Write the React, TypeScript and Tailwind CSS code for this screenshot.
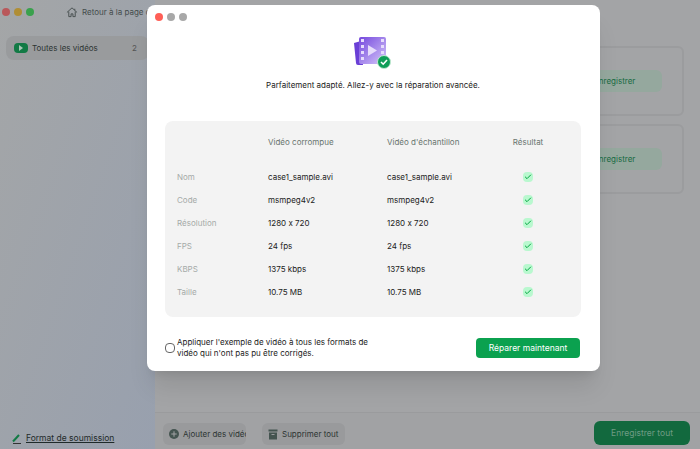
import { Check, Plus } from 'lucide-react';

const rows = [
  { label: 'Nom', value: 'case1_sample.avi' },
  { label: 'Code', value: 'msmpeg4v2' },
  { label: 'Résolution', value: '1280 x 720' },
  { label: 'FPS', value: '24 fps' },
  { label: 'KBPS', value: '1375 kbps' },
  { label: 'Taille', value: '10.75 MB' },
];

function VideoBadge() {
  return (
    <svg width="38" height="32" viewBox="0 0 38 32">
      <defs>
        <linearGradient id="film" x1="0" y1="0" x2="1" y2="1">
          <stop offset="0" stopColor="#7447dd" />
          <stop offset="1" stopColor="#d6c8fa" />
        </linearGradient>
      </defs>
      <path d="M0 6 L7 4 L9 28 L4 28 Q2 28 2 26 Z" fill="#6a3fd6" />
      <rect x="5" y="0" width="27" height="27" rx="2" fill="url(#film)" />
      <g fill="#e6dcfb">
        <rect x="7" y="2" width="3" height="3" />
        <rect x="7" y="8" width="3" height="3" />
        <rect x="7" y="14" width="3" height="3" />
        <rect x="7" y="20" width="3" height="3" />
        <rect x="27" y="2" width="3" height="3" />
        <rect x="27" y="8" width="3" height="3" />
        <rect x="27" y="14" width="3" height="3" />
      </g>
      <path d="M14 8 L23 13.500 L14 19 Z" fill="#e6dcfb" />
      <circle cx="30" cy="25" r="6.500" fill="#0f9d58" stroke="#bfe8d0" strokeWidth="1" />
      <path d="M27 25 L29.200 27.200 L33 23" fill="none" stroke="white" strokeWidth="1.600" />
    </svg>
  );
}

function ResultCheck() {
  return (
    <div className="flex size-2.5 items-center justify-center rounded-sm bg-green-200">
      <Check className="size-2 text-green-600" strokeWidth={3} />
    </div>
  );
}

function SavedCard() {
  return (
    <div className="flex h-[70px] items-center justify-end rounded-md border-2 border-[#9b9c9e] pr-5">
      <div className="flex h-5.5 w-24 items-center rounded-md bg-[#95a89e] pl-7 text-[#176b42]">Enregistrer</div>
    </div>
  );
}

export default function App() {
  return (
    <div className="relative flex h-[449px] w-[700px] overflow-hidden bg-[#a3a4a6] text-[8px] font-['Inter','Liberation_Sans',sans-serif] text-[#222] [font-feature-settings:'calt'_0]">
      {/* app behind the dialog */}
      <aside className="flex w-[155px] flex-col bg-gradient-to-br from-[#a4a6a7] to-[#98a0ae] px-1.5">
        <div className="-ml-1 flex h-6 items-center gap-1 whitespace-nowrap text-[#444c4c]">
          <span className="size-2 shrink-0 rounded-full bg-[#b9585a]" />
          <span className="size-2 shrink-0 rounded-full bg-[#b08e35]" />
          <span className="size-2 shrink-0 rounded-full bg-[#3aa14d]" />
          <svg width="12" height="12" viewBox="0 0 13 12" fill="none" stroke="#444c4c" className="ml-7 shrink-0">
            <path d="M1 6.500 L6.500 1.500 L12 6.500 M3 5.500 V11 H5.500 V8 H7.500 V11 H10 V5.500 M9.500 2.500 V4" />
          </svg>
          <span>Retour à la page d</span>
        </div>
        <div className="mt-3 flex h-6 items-center gap-1 rounded-lg bg-[#999b9d] pl-2 pr-3 text-[#2d3533]">
          <div className="flex h-2.5 w-3.5 items-center justify-center rounded-sm bg-[#127a45]">
            <div className="h-0 w-0 border-y-[3px] border-l-4 border-y-transparent border-l-[#a9c7b7]" />
          </div>
          <span className="flex-1">Toutes les vidéos</span>
          <span className="text-[#555]">2</span>
        </div>
        <div className="mt-auto mb-1 flex items-center gap-1 pl-1.5 text-[8.5px] text-[#1f2a2a]">
          <svg width="10" height="11" viewBox="0 0 10 11">
            <path d="M1 8.500 L7 2" stroke="#127a45" strokeWidth="2" />
            <path d="M1 10.500 H9" stroke="#333" strokeWidth="1" />
          </svg>
          <span className="underline">Format de soumission</span>
        </div>
      </aside>

      <main className="flex flex-1 flex-col">
        <div className="flex flex-1 flex-col gap-2 pt-11.5 pl-4 pr-4">
          <SavedCard />
          <SavedCard />
        </div>
        <div className="flex h-[37px] items-end gap-4 border-t border-[#9a9b9d] bg-[#a1a2a4] pb-1 pl-2 pr-2.5">
          <div className="flex h-5.5 w-[83px] items-center gap-1 overflow-hidden whitespace-nowrap rounded-md bg-[#999a9c] pl-1.5 text-[#2d3533]">
            <div className="flex size-2.5 shrink-0 items-center justify-center rounded-full bg-[#445450]">
              <Plus className="size-2 text-[#a1a2a4]" strokeWidth={3} />
            </div>
            Ajouter des vidéos
          </div>
          <div className="flex h-5.5 w-[83px] items-center gap-1 whitespace-nowrap rounded-md bg-[#999a9c] pl-1.5 text-[#2d3533]">
            <svg width="10" height="11" viewBox="0 0 10 11" className="shrink-0">
              <rect x="0.500" y="0.500" width="9" height="2" fill="#445450" />
              <path d="M1 3.500 H9 V10.500 H1 Z M3.500 5 V6 H6.500 V5 Z" fill="#445450" fillRule="evenodd" />
            </svg>
            Supprimer tout
          </div>
          <div className="ml-auto flex h-6 w-24 items-center justify-center rounded-md bg-[#12693e] text-[8.5px] text-[#6f9b84]">
            Enregistrer tout
          </div>
        </div>
      </main>

      {/* dialog */}
      <div className="absolute left-[147px] top-[5px] flex h-[366px] w-[453px] flex-col rounded-lg bg-white pl-[18px] pr-[19px] shadow-xl">
        <div className="-ml-2.5 flex h-6 items-center gap-1">
          <span className="size-2 shrink-0 rounded-full bg-[#ff5f57]" />
          <span className="size-2 shrink-0 rounded-full bg-[#a8a8a8]" />
          <span className="size-2 shrink-0 rounded-full bg-[#a8a8a8]" />
        </div>
        <div className="mt-2 flex justify-center">
          <VideoBadge />
        </div>
        <p className="mt-2.5 text-center">Parfaitement adapté. Allez-y avec la réparation avancée.</p>

        <div className="mt-7.5 rounded-lg bg-[#f3f3f3] pl-3 pb-3.5">
          <div className="grid grid-cols-[91px_119px_116px_50px] items-center">
            <div className="col-start-2 flex h-10.5 items-center text-[#69756f]">Vidéo corrompue</div>
            <div className="flex h-10.5 items-center text-[#69756f]">Vidéo d'échantillon</div>
            <div className="flex h-10.5 items-center justify-center text-[#69756f]">Résultat</div>
          </div>
          <div className="grid grid-cols-[91px_119px_116px_50px] grid-rows-6 items-center pt-0.5">
            {rows.map((row) => (
              <div key={row.label} className="col-span-4 grid h-[23px] grid-cols-subgrid items-center">
                <span className="text-[#a5aaa8]">{row.label}</span>
                <span>{row.value}</span>
                <span>{row.value}</span>
                <div className="flex justify-center">
                  <ResultCheck />
                </div>
              </div>
            ))}
          </div>
        </div>

        <div className="mt-5 flex items-center justify-between">
          <div className="flex items-center gap-0.5">
            <div className="size-2.5 shrink-0 rounded-sm border border-[#666]" />
            <p className="w-52 leading-[11px]">Appliquer l'exemple de vidéo à tous les formats de vidéo qui n'ont pas pu être corrigés.</p>
          </div>
          <div className="mr-px flex h-5 w-[104px] items-center justify-center rounded-sm bg-[#0ba14f] text-[8.5px] text-white">
            Réparer maintenant
          </div>
        </div>
      </div>
    </div>
  );
}
